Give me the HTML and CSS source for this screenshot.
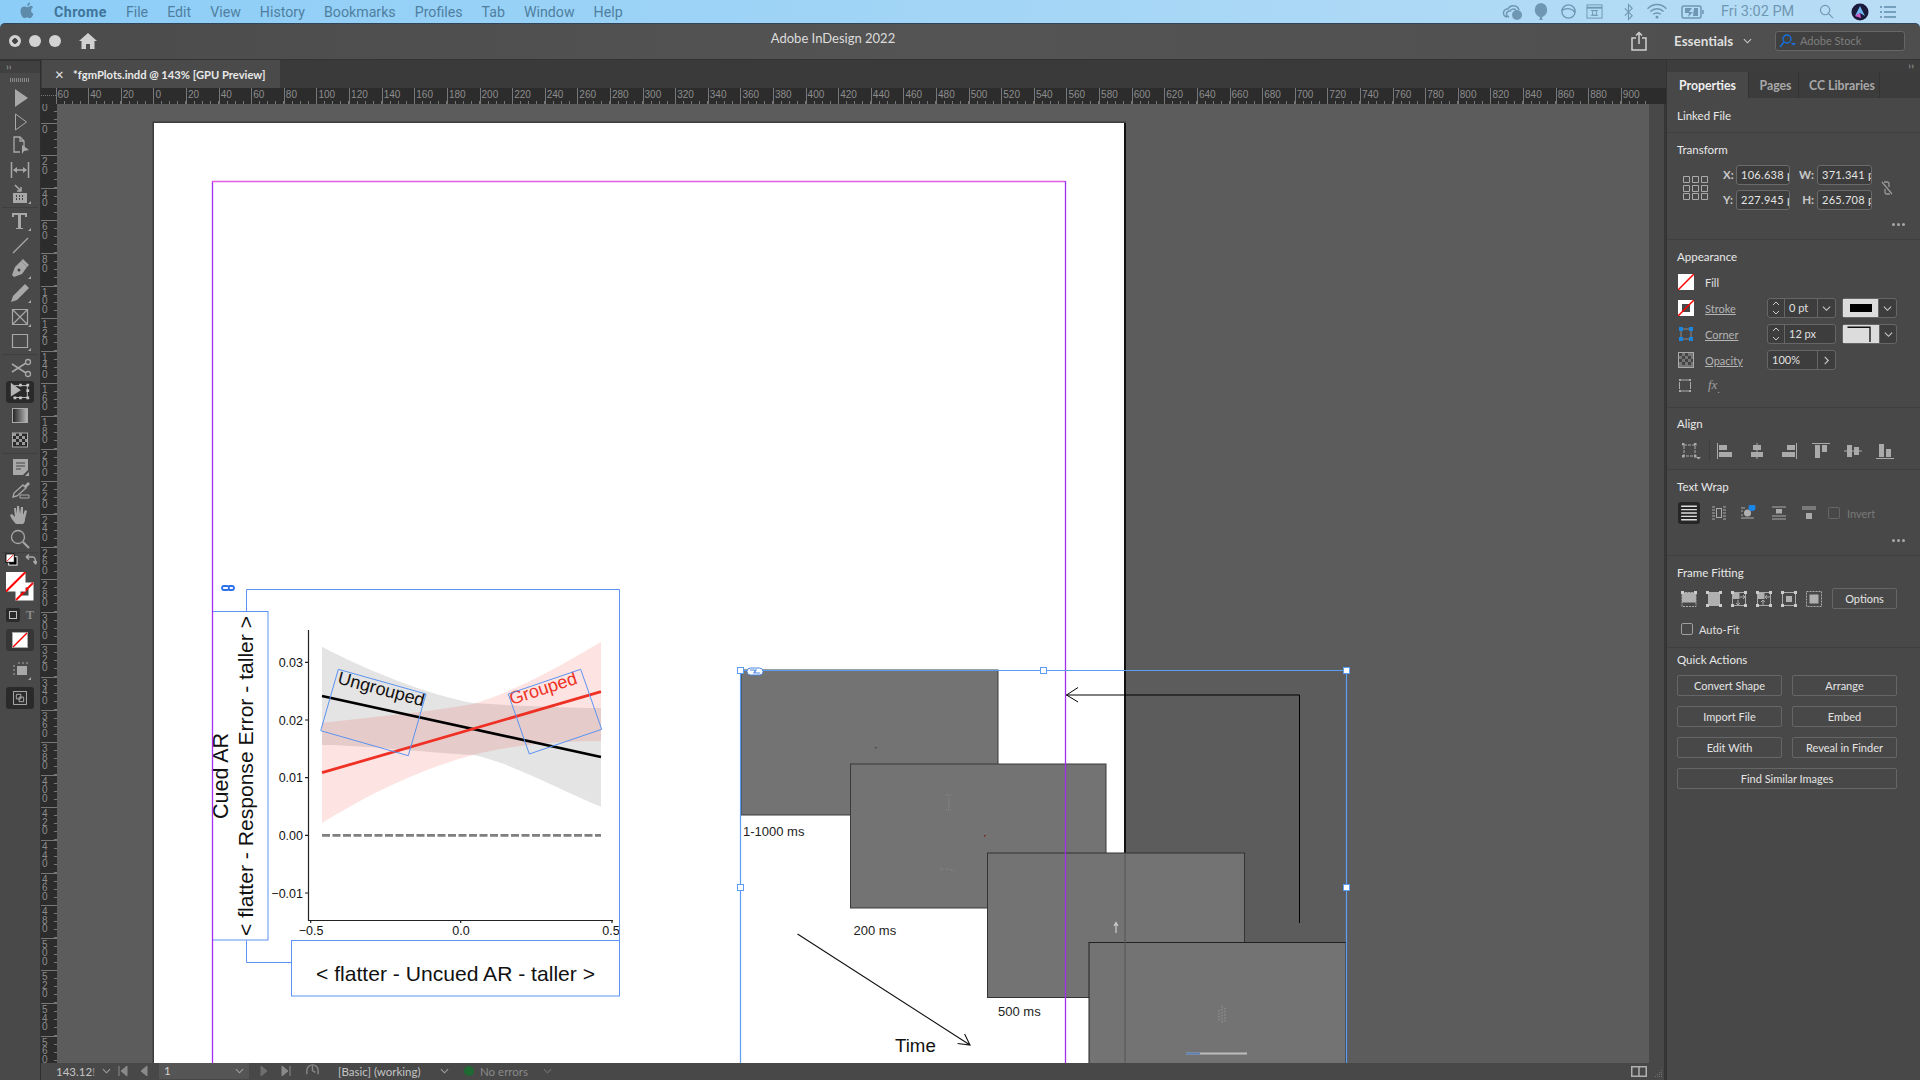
FILE: index.html
```html
<!DOCTYPE html>
<html lang="en">

<head>
    <meta charset="UTF-8">
    <title>Adobe InDesign 2022</title>
    <link rel="stylesheet" href="styles.css">
</head>

<body>
    <div class="menubar">
        <svg class="apple" viewBox="0 0 14 17"><path d="M10.2 4.6c-1.2 0-1.9.7-3 .7-1.1 0-1.9-.7-3-.7C2.300 4.600.5 6.200.5 9.200c0 3 2.200 7 4 7 1 0 1.500-.7 2.700-.7 1.200 0 1.600.7 2.700.7 1.500 0 3-2.700 3.500-4.500-1.500-.6-2.300-1.800-2.300-3.300 0-1.300.7-2.300 1.900-3-.7-1.100-1.800-1.800-2.800-1.800zM9.900.4C8.400.6 7 2 7.200 3.900 8.700 3.900 10.100 2.300 9.900.4z"/></svg>
        <div class="menu-items">
            <b>Chrome</b><span>File</span><span>Edit</span><span>View</span><span>History</span><span>Bookmarks</span><span>Profiles</span><span>Tab</span><span>Window</span><span>Help</span>
        </div>
        <div class="status-items">
            <svg class="m1" viewBox="0 0 22 18"><path d="M5 14a4 4 0 0 1 1-8 6 6 0 0 1 11 1M7 14a3 3 0 0 1 1-6 4 4 0 0 1 6-1" fill="none" stroke="#6f97b3" stroke-width="1.500"/><circle cx="15" cy="12" r="5" fill="#6f97b3"/></svg>
            <svg class="m2" viewBox="0 0 16 22"><path d="M8 1c4 0 7 3 7 8 0 4-3 7-6 8l1 3H6l1-3c-3-1-6-4-6-8 0-5 3-8 7-8z" fill="#6f97b3"/></svg>
            <svg class="m3" viewBox="0 0 18 18"><circle cx="9" cy="9" r="7" fill="none" stroke="#6f97b3" stroke-width="1.500"/><path d="M2 8c4-3 10-3 14 2" fill="none" stroke="#6f97b3" stroke-width="1.500"/></svg>
            <svg class="m4" viewBox="0 0 18 18"><rect x="1" y="2" width="16" height="14" fill="none" stroke="#6f97b3"/><path d="M1 5h16" stroke="#6f97b3" stroke-width="2"/><path d="M7 8h4v5H7zM5 8h8M5 13h8" fill="none" stroke="#6f97b3"/></svg>
            <svg class="m5" viewBox="0 0 12 18"><path d="M2 5l8 8-4 4V1l4 4-8 8" fill="none" stroke="#6f97b3" stroke-width="1.200"/></svg>
            <svg class="m6" viewBox="0 0 22 18"><path d="M1 6c6-6 14-6 20 0M4 9c4-4 10-4 14 0M7 12c2-2 6-2 8 0" fill="none" stroke="#6f97b3" stroke-width="1.500"/><circle cx="11" cy="15" r="1.500" fill="#6f97b3"/></svg>
            <svg class="m7" viewBox="0 0 24 14"><rect x="1" y="1" width="19" height="12" rx="2" fill="none" stroke="#6f97b3" stroke-width="1.500"/><path d="M4 3h7l-3 4h4l-5 5 1-4H4zM13 3h4v8h-5z" fill="#6f97b3"/><path d="M22 5v4" stroke="#6f97b3" stroke-width="1.500"/></svg>
            <span class="clock">Fri 3:02 PM</span>
            <svg class="m8" viewBox="0 0 16 16"><circle cx="6.500" cy="6.500" r="5" fill="none" stroke="#6f97b3" stroke-width="1.200"/><path d="M10 10l5 5" stroke="#6f97b3" stroke-width="1.200"/></svg>
            <svg class="m9" viewBox="0 0 18 18"><circle cx="9" cy="9" r="8.500" fill="#1a1a3a"/><path d="M9 3l5 10-5-3-5 3z" fill="#6fb6f0"/><path d="M4 13l5-3 1 5z" fill="#d85ad0"/></svg>
            <svg class="m10" viewBox="0 0 18 14"><path d="M1 2h2M5 2h12M1 7h2M5 7h12M1 12h2M5 12h12" stroke="#5f8bab" stroke-width="1.500"/></svg>
        </div>
    </div>

    <div class="titlebar">
        <div class="lights"><i class="light first"></i><i class="light"></i><i class="light"></i></div>
        <svg class="home" viewBox="0 0 18 16"><path d="M9 0l9 8h-2.500v8H11v-5H7v5H2.500V8H0z" fill="#d0d0d0"/></svg>
        <div class="app-name">Adobe InDesign 2022</div>
        <svg class="share" viewBox="0 0 16 20"><path d="M5 7H1v12h14V7h-4M8 13V2M5 4.500L8 1.500l3 3" fill="none" stroke="#d0d0d0" stroke-width="1.500"/></svg>
        <div class="workspace">Essentials <svg viewBox="0 0 10 6"><path d="M1 1l4 4 4-4" fill="none" stroke="#ccc" stroke-width="1.200"/></svg></div>
        <div class="stock">
            <svg viewBox="0 0 18 14"><circle cx="9" cy="5" r="4" fill="none" stroke="#1473e6" stroke-width="1.300"/><path d="M6 8l-4 5" stroke="#1473e6" stroke-width="1.300"/><path d="M13 9h5l-2.500 2.500z" fill="#1473e6"/></svg>
            Adobe Stock
        </div>
    </div>

    <div class="app">
        <div class="toolbar">
            <div class="tool-head">&rsaquo;&rsaquo;</div>
            <div class="grip"></div>
            <div class="tool-group">
                <div class="tool"><svg viewBox="0 0 24 24"><path d="M7 3l13 9-13 9z" fill="#a8a8a8"/></svg></div>
                <div class="tool"><svg viewBox="0 0 24 24"><path d="M7.500 4l11 8-11 8z" fill="none" stroke="#a8a8a8"/></svg></div>
                <div class="tool"><svg viewBox="0 0 24 24"><path d="M16 14V7l-4-4H6v15h6M12 3v4h4" fill="none" stroke="#a8a8a8" stroke-width="1.300"/><path d="M14 11l7 5-5 1-2 3z" fill="#a8a8a8"/></svg></div>
                <div class="tool"><svg viewBox="0 0 24 24"><path d="M3.500 4v16M20.500 4v16M6 12h12" stroke="#a8a8a8" stroke-width="1.500" fill="none"/><path d="M5 12l4-3v6zM19 12l-4-3v6z" fill="#a8a8a8"/></svg></div>
                <div class="tool"><svg viewBox="0 0 24 24"><path d="M5 11h14v10H5z" fill="#a8a8a8"/><path d="M8 14h1M11 14h1M14 14h1M8 17h1M11 17h1M14 17h1" stroke="#444" stroke-width="2"/><path d="M7 3l6 6M13 5v4H9" stroke="#a8a8a8" stroke-width="1.500" fill="none"/><path d="M20 22h3v-3z" fill="#a8a8a8"/></svg></div>
            </div>
            <div class="tool-group">
                <div class="tool"><svg viewBox="0 0 24 24"><path d="M4 4h15v4h-2V6h-4v13h2v1H8v-1h2V6H6v2H4z" fill="#a8a8a8"/><path d="M20 22h3v-3z" fill="#a8a8a8"/></svg></div>
                <div class="tool"><svg viewBox="0 0 24 24"><path d="M5 20L20 5" stroke="#a8a8a8" stroke-width="1.300"/></svg></div>
                <div class="tool"><svg viewBox="0 0 24 24"><path d="M13 4l6 6-5 7-8 3-2-2 3-8z" fill="#a8a8a8"/><path d="M15 2l6 6-2 2-6-6z" fill="#a8a8a8"/><circle cx="11" cy="13" r="1.500" fill="#444"/><path d="M20 22h3v-3z" fill="#a8a8a8"/></svg></div>
                <div class="tool"><svg viewBox="0 0 24 24"><path d="M17 3l4 4-12 12-6 2 2-6z" fill="#a8a8a8"/><path d="M20 22h3v-3z" fill="#a8a8a8"/></svg></div>
                <div class="tool"><svg viewBox="0 0 24 24"><path d="M4.500 4.500h15v15h-15zM4.500 4.500l15 15M19.500 4.500l-15 15" fill="none" stroke="#a8a8a8" stroke-width="1.200"/><path d="M20 22h3v-3z" fill="#a8a8a8"/></svg></div>
                <div class="tool"><svg viewBox="0 0 24 24"><path d="M4.500 5.500h15v13h-15z" fill="none" stroke="#a8a8a8" stroke-width="1.200"/><path d="M20 22h3v-3z" fill="#a8a8a8"/></svg></div>
            </div>
            <div class="tool-group">
                <div class="tool"><svg viewBox="0 0 24 24"><circle cx="20" cy="6" r="2.500" fill="none" stroke="#a8a8a8" stroke-width="1.300"/><circle cx="20" cy="18" r="2.500" fill="none" stroke="#a8a8a8" stroke-width="1.300"/><path d="M18 7L4 16M18 17L4 8" stroke="#a8a8a8" stroke-width="1.500"/></svg></div>
                <div class="tool selected"><svg viewBox="0 0 24 24"><path d="M2 2l11 8-11 7z" fill="#b5b5b5"/><path d="M6 5h14v13H5" fill="none" stroke="#c8c8c8"/><path d="M5 17h3v3H5zM11 17h3v3h-3zM19 17h3v3h-3zM19 9h3v3h-3zM19 3h3v3h-3zM11 3h3v3h-3z" fill="#c8c8c8"/></svg></div>
                <div class="tool"><svg viewBox="0 0 24 24"><defs><linearGradient id="gt"><stop offset="0" stop-color="#222"/><stop offset="1" stop-color="#bbb"/></linearGradient></defs><rect x="4.500" y="4.500" width="15" height="14" fill="url(#gt)" stroke="#aaa"/></svg></div>
                <div class="tool"><svg viewBox="0 0 24 24"><rect x="4.500" y="5" width="15" height="14" fill="#2a2a2a" stroke="#aaa"/><path d="M5 5h3v3H5zM11 5h3v3h-3zM8 8h3v3H8zM14 8h3v3h-3zM5 11h3v3H5zM11 11h3v3h-3zM17 11h2v3h-2zM8 14h3v3H8zM14 14h3v3h-3z" fill="#999"/></svg></div>
            </div>
            <div class="tool-group">
                <div class="tool"><svg viewBox="0 0 24 24"><path d="M5 4h15v11l-5 5H5z" fill="#a8a8a8"/><path d="M8 8h9M8 11h9M8 14h5" stroke="#444" stroke-width="1.200"/><path d="M17 21l4-4v4z" fill="#a8a8a8"/></svg></div>
                <div class="tool"><svg viewBox="0 0 24 24"><path d="M20 3l2 2-4 4-2-2z" fill="#a8a8a8"/><path d="M15 6l3 3-9 8-4 1 1-4z" fill="none" stroke="#a8a8a8" stroke-width="1.300"/><path d="M12 16h9v3h-9z" fill="none" stroke="#a8a8a8"/></svg></div>
                <div class="tool"><svg viewBox="0 0 24 24"><path d="M8 21c-2-2-5-6-6-9l2-1 3 3-1-9 2 0 1 6 0-8h2l1 8 1-7h2l0 8 2-5 2 1-2 8c0 3-1 4-2 5z" fill="#a8a8a8"/></svg></div>
                <div class="tool"><svg viewBox="0 0 24 24"><circle cx="10" cy="10" r="6.500" fill="none" stroke="#a8a8a8" stroke-width="1.300"/><path d="M15 15l6 6" stroke="#a8a8a8" stroke-width="2"/></svg></div>
            </div>
            <div class="swatch-tools">
                <div class="defaults">
                    <svg viewBox="0 0 14 14"><rect x="4" y="4" width="9" height="9" fill="#000" stroke="#fff"/><rect x="1" y="1" width="9" height="9" fill="#fff" stroke="#000"/><path d="M2 9l7-7" stroke="#f00"/></svg>
                    <svg viewBox="0 0 12 12"><path d="M1 4h7c2 0 2.500 2 2.500 6M1 4l3-2.500M1 4l3 2.500M10.500 11l-2-3M10.500 11l2-3" fill="none" stroke="#aaa" stroke-width="1.400"/></svg>
                </div>
                <div class="fillstroke">
                    <svg viewBox="0 0 29 30"><rect x="9.500" y="10.500" width="18" height="18" fill="#fff"/><path d="M14.500 15.500h8v8h-8z" fill="#484848"/><path d="M10 28l17-17" stroke="#f00" stroke-width="1.800"/><rect y="0" width="19.500" height="19.500" fill="#fff"/><path d="M0 19.500L19.500 0" stroke="#f00" stroke-width="2"/></svg>
                </div>
                <div class="format-row"><span class="fmt-box"></span><span class="fmt-t">T</span></div>
                <div class="apply-box"><svg viewBox="0 0 16 16"><rect x=".5" y=".5" width="15" height="15" fill="#fff" stroke="#aaa"/><path d="M1 15L15 1" stroke="#f00" stroke-width="1.500"/></svg></div>
                <div class="tool mode-tool"><svg viewBox="0 0 24 24"><path d="M9 8h10v9H9z" fill="#a8a8a8"/><path d="M7 8H5M7 12H5M7 16H5M11 6V4M15 6V4M19 6V4" stroke="#a8a8a8"/><path d="M20 22h3v-3z" fill="#a8a8a8"/></svg></div>
                <div class="tool selected mode-box"><svg viewBox="0 0 24 24"><rect x="5" y="5" width="14" height="14" fill="none" stroke="#b5b5b5"/><path d="M8 8h5v5H8zM11 11h5v5h-5z" fill="none" stroke="#b5b5b5"/></svg></div>
            </div>
        </div>

        <div class="main">
            <div class="tabstrip">
                <div class="doc-tab"><span class="tab-x">&times;</span>*fgmPlots.indd @ 143% [GPU Preview]</div>
            </div>
            <div class="ruler-h">
                <div class="ruler-corner"></div>
                <span>60</span><span>40</span><span>20</span><span>0</span><span>20</span><span>40</span><span>60</span><span>80</span><span>100</span><span>120</span><span>140</span><span>160</span><span>180</span><span>200</span><span>220</span><span>240</span><span>260</span><span>280</span><span>300</span><span>320</span><span>340</span><span>360</span><span>380</span><span>400</span><span>420</span><span>440</span><span>460</span><span>480</span><span>500</span><span>520</span><span>540</span><span>560</span><span>580</span><span>600</span><span>620</span><span>640</span><span>660</span><span>680</span><span>700</span><span>720</span><span>740</span><span>760</span><span>780</span><span>800</span><span>820</span><span>840</span><span>860</span><span>880</span><span>900</span>
            </div>
            <div class="work-row">
                <div class="ruler-v">
                    <span>0</span><span>0</span><span>20</span><span>40</span><span>60</span><span>80</span><span>100</span><span>120</span><span>140</span><span>160</span><span>180</span><span>200</span><span>220</span><span>240</span><span>260</span><span>280</span><span>300</span><span>320</span><span>340</span><span>360</span><span>380</span><span>400</span><span>420</span><span>440</span><span>460</span><span>480</span><span>500</span><span>520</span><span>540</span><span>560</span>
                </div>

                <!-- document canvas, coordinates are screen pixels -->
                <svg class="canvas" viewBox="57 104 1592 959">
                    <rect x="152.500" y="121.500" width="973" height="960" fill="#3c3c3c"/>
                    <rect x="154" y="123" width="970" height="950" fill="#fff"/>
                    <rect x="1124" y="123" width="2" height="950" fill="#111"/>

                    <!-- left figure -->
                    <path d="M322 646.700C370 672 430 695 473 703C520 706 570 708 601 708V806.700C560 790 510 762 473 755C420 752 360 745 322 745Z" fill="#000" fill-opacity=".105"/>
                    <path d="M322 723C380 716 430 712 473 704C520 690 570 660 601 641.700V741C560 741 510 745 473 755C410 772 360 800 322 823Z" fill="#ee3124" fill-opacity=".13"/>
                    <path d="M322 696L601 757" stroke="#000" stroke-width="2.800"/>
                    <path d="M322 772.700L601 691.700" stroke="#ee3124" stroke-width="2.800"/>
                    <path d="M322 835.300H601" stroke="#7f7f7f" stroke-width="2.800" stroke-dasharray="8 2.500"/>
                    <path d="M308.500 630V920.500H613M305 662.300h3M305 720h3M305 777.700h3M305 835.300h3M305 893h3M310.700 920v3M460.700 920v3M612 920v3" fill="none" stroke="#222" stroke-width="1.200"/>
                    <g class="tick-y">
                        <text x="303" y="666.500">0.03</text>
                        <text x="303" y="724.500">0.02</text>
                        <text x="303" y="782">0.01</text>
                        <text x="303" y="839.500">0.00</text>
                        <text x="303" y="897.500">−0.01</text>
                    </g>
                    <g class="tick-x">
                        <text x="311" y="934.500">−0.5</text>
                        <text x="461" y="934.500">0.0</text>
                        <text x="611" y="934.500">0.5</text>
                    </g>
                    <text class="plot-label" transform="translate(336.700 683.300) rotate(15)">Ungrouped</text>
                    <text class="plot-label red" transform="translate(511.700 705) rotate(-18)">Grouped</text>
                    <text class="axis-cued" transform="translate(228 776) rotate(-90)">Cued AR</text>
                    <text class="axis-long" transform="translate(253 776) rotate(-90)">&lt; flatter - Response Error - taller &gt;</text>
                    <text class="axis-long" x="455.500" y="980.500">&lt; flatter - Uncued AR - taller &gt;</text>

                    <g fill="none" stroke="#5b93f2" stroke-width="1">
                        <path d="M246.500 611.500V589.500H619.500V940M246.500 940.500V962.500H291.500"/>
                        <rect x="212.500" y="611.500" width="55.500" height="328.500"/>
                        <rect x="291.500" y="940.500" width="328" height="55.500"/>
                        <path d="M338.300 669.300L426 694L408.300 755.700L320.700 730.700Z"/>
                        <path d="M508.300 694L580.700 669.300L601.700 729.300L529.300 754Z"/>
                    </g>
                    <path d="M224 586h3a2 2 0 0 1 0 4h-3a2 2 0 0 1 0-4zM229 586h3a2 2 0 0 1 0 4h-3" fill="none" stroke="#2f72e8" stroke-width="1.800"/>

                    <!-- right figure -->
                    <rect x="741" y="670" width="257" height="145" fill="#737373" stroke="#3a3a3a"/>
                    <rect x="850.500" y="764" width="255.500" height="144" fill="#737373" stroke="#3a3a3a"/>
                    <rect x="987.500" y="853" width="257" height="144.500" fill="#737373" stroke="#333"/>
                    <rect x="1089" y="942.500" width="257" height="140" fill="#737373" stroke="#222"/>
                    <path d="M1125 853V1063" stroke="#555"/>
                    <path d="M1299.500 923V695H1066M1078 687.500L1066.500 695L1078 702" fill="none" stroke="#000" stroke-width="1"/>
                    <path d="M1116 933V923M1114 926l2-3.500 2 3.500" stroke="#ccc" fill="none" stroke-width="1.200"/>
                    <path d="M946 795h6M949 798v10M946 810h6M940 869h4M946 869h3M951 870h3" stroke="#8f8f8f" stroke-dasharray="1 1"/>
                    <path d="M1222 1006v18M1225 1008v15M1219 1010v12" stroke="#999" stroke-dasharray="1.500 1.500"/>
                    <rect x="984" y="835" width="1.500" height="1.500" fill="#7a2020"/>
                    <rect x="875" y="747" width="1.500" height="1.500" fill="#444"/>
                    <rect x="1186" y="1052.500" width="61" height="2" fill="#bdbdbd"/>
                    <rect x="1186" y="1052.500" width="14" height="2" fill="#5b7fb5"/>
                    <g class="stim-label">
                        <text x="743" y="836">1-1000 ms</text>
                        <text x="853.500" y="935">200 ms</text>
                        <text x="998" y="1016">500 ms</text>
                    </g>
                    <text class="time-label" x="895" y="1052">Time</text>
                    <path d="M797.500 934L970 1045M964.600 1034L970 1045L957.600 1043.500" fill="none" stroke="#111" stroke-width="1.100"/>

                    <!-- guides -->
                    <path d="M212.500 1063V181.500" stroke="#a62df0" stroke-width="1.300" fill="none"/>
                    <path d="M212 181.500H1065" stroke="#e25ce8" stroke-width="1.300"/>
                    <path d="M1065.500 181V1063" stroke="#a02fe8" stroke-width="1.300"/>

                    <path d="M740.500 1063V670.500H1346.500V1063" fill="none" stroke="#5b9cf5" stroke-width="1.200"/>
                    <g fill="#fff" stroke="#5b9cf5">
                        <rect x="737.500" y="667.500" width="6" height="6"/>
                        <rect x="1040.500" y="667.500" width="6" height="6"/>
                        <rect x="1343.500" y="667.500" width="6" height="6"/>
                        <rect x="737.500" y="884.500" width="6" height="6"/>
                        <rect x="1343.500" y="884.500" width="6" height="6"/>
                    </g>
                    <rect x="747" y="668" width="16" height="7" rx="3.500" fill="#fff" stroke="#4a86e0"/>
                    <path d="M750 670h4a1.500 1.500 0 0 1 0 3h-1M760 673h-4a1.500 1.500 0 0 1 0-3h1" fill="none" stroke="#4a86e0"/>
                </svg>

                <div class="scroll-v"></div>
            </div>
            <div class="statusbar">
                <span class="zoom-val">143.12<span class="cut">!</span></span>
                <svg class="chev" viewBox="0 0 10 6"><path d="M1 1l4 4 4-4"/></svg>
                <svg class="nav first" viewBox="0 0 10 12"><path d="M1 1v10M9 1v10L3 6z"/></svg>
                <svg class="nav" viewBox="0 0 10 12"><path d="M8 1v10L2 6z"/></svg>
                <div class="page-field">1<svg class="chev" viewBox="0 0 10 6"><path d="M1 1l4 4 4-4"/></svg></div>
                <svg class="nav dim" viewBox="0 0 10 12"><path d="M2 1v10l6-5z"/></svg>
                <svg class="nav" viewBox="0 0 10 12"><path d="M1 1v10l6-5zM9 1v10"/></svg>
                <svg class="timer" viewBox="0 0 16 16"><path d="M2 12V8a6 6 0 0 1 12 0v4M8 3v5l3 2" fill="none" stroke="#888" stroke-width="1.500"/></svg>
                <span class="preflight">[Basic] (working)</span>
                <svg class="chev" viewBox="0 0 10 6"><path d="M1 1l4 4 4-4"/></svg>
                <i class="ok-dot"></i>
                <span class="no-errors">No errors</span>
                <svg class="chev dim" viewBox="0 0 10 6"><path d="M1 1l4 4 4-4"/></svg>
                <svg class="split" viewBox="0 0 16 11"><path d="M.75.75h14.500v9.500H.75zM8 .75v9.500" fill="none" stroke="#b0b0b0" stroke-width="1.500"/></svg>
                <svg class="resize-grip" viewBox="0 0 9 9"><path d="M7 1h1v1H7zM5 3h1v1H5zM7 3h1v1H7zM3 5h1v1H3zM5 5h1v1H5zM7 5h1v1H7zM1 7h1v1H1zM3 7h1v1H3zM5 7h1v1H5zM7 7h1v1H7z" fill="#707070" stroke="none"/></svg>
            </div>
        </div>

        <div class="panel">
            <div class="panel-head">&rsaquo;&rsaquo;</div>
            <div class="tabs">
                <div class="ptab active">Properties</div>
                <div class="ptab t2">Pages</div>
                <div class="ptab t3">CC Libraries</div>
            </div>

            <div class="sec sec-linked">
                <div class="sec-title">Linked File</div>
            </div>

            <div class="sec sec-transform">
                <div class="sec-title">Transform</div>
                <div class="transform">
                    <svg class="proxy" viewBox="0 0 25 24"><g fill="none" stroke="#aaa"><path d="M.5.500h6v6h-6zM9.500.500h6v6h-6zM18.500.500h6v6h-6zM.5 9.500h6v6h-6zM9.500 9.500h6v6h-6zM18.500 9.500h6v6h-6zM.5 17.500h6v6h-6zM9.500 17.500h6v6h-6zM18.500 17.500h6v6h-6z"/></g></svg>
                    <div class="xywh">
                        <label>X:</label><div class="field">106.638 p</div>
                        <label class="right">W:</label><div class="field">371.341 p</div>
                        <label>Y:</label><div class="field">227.945 p</div>
                        <label class="right">H:</label><div class="field">265.708 p</div>
                    </div>
                    <svg class="chain" viewBox="0 0 12 14"><path d="M3 1h3a2 2 0 0 1 2 2v3M9 13H6a2 2 0 0 1-2-2V8M1 1l10 12" fill="none" stroke="#999" stroke-width="1.300"/></svg>
                </div>
                <div class="dots"><i></i><i></i><i></i></div>
            </div>

            <div class="sec sec-appearance">
                <div class="sec-title">Appearance</div>
                <div class="app-row">
                    <svg class="sw" viewBox="0 0 16 16"><rect width="16" height="16" fill="#fff"/><path d="M0 16L16 0" stroke="#f00" stroke-width="1.500"/></svg>
                    <span>Fill</span>
                </div>
                <div class="app-row">
                    <svg class="sw" viewBox="0 0 16 16"><rect width="16" height="16" fill="#fff"/><rect x="4" y="4" width="8" height="8" fill="#484848"/><path d="M0 16L16 0" stroke="#f00" stroke-width="1.500"/></svg>
                    <span class="lnk">Stroke</span>
                    <div class="spin"><div class="arrows"><svg viewBox="0 0 8 14"><path d="M1 4l3-3 3 3M1 10l3 3 3-3"/></svg></div><div class="spin-val">0 pt</div><div class="drop"><svg viewBox="0 0 10 6"><path d="M1 1l4 4 4-4"/></svg></div></div>
                    <div class="pick"><div class="pick-sw"><i class="black-bar"></i></div><div class="drop"><svg viewBox="0 0 10 6"><path d="M1 1l4 4 4-4"/></svg></div></div>
                </div>
                <div class="app-row">
                    <svg class="sw" viewBox="0 0 16 16"><path d="M5 3h6M5 13h6M3 5v6M13 5v6" stroke="#888"/><path d="M1 1h4v4H1zM11 1h4v4h-4zM1 11h4v4H1zM11 11h4v4h-4z" fill="#1a86e0"/></svg>
                    <span class="lnk">Corner</span>
                    <div class="spin"><div class="arrows"><svg viewBox="0 0 8 14"><path d="M1 4l3-3 3 3M1 10l3 3 3-3"/></svg></div><div class="spin-val">12 px</div></div>
                    <div class="pick"><div class="pick-sw"><svg viewBox="0 0 36 20"><path d="M3 2.500h25V19" fill="none" stroke="#111" stroke-width="1.500"/></svg></div><div class="drop"><svg viewBox="0 0 10 6"><path d="M1 1l4 4 4-4"/></svg></div></div>
                </div>
                <div class="app-row">
                    <svg class="sw" viewBox="0 0 16 16"><rect x=".5" y=".5" width="15" height="15" fill="#777" stroke="#aaa"/><path d="M1 1h3v3H1zM7 1h3v3H7zM4 4h3v3H4zM10 4h3v3h-3zM1 7h3v3H1zM7 7h3v3H7zM13 7h2v3h-2zM4 10h3v3H4zM10 10h3v3h-3z" fill="#444"/></svg>
                    <span class="lnk">Opacity</span>
                    <div class="spin"><div class="spin-val">100%</div><div class="drop"><svg viewBox="0 0 6 10"><path d="M1 1l4 4-4 4"/></svg></div></div>
                </div>
                <div class="app-row">
                    <svg class="sw fx-box" viewBox="0 0 16 16"><path d="M3 2h8M3 13h8M1.500 4v7M12.500 4v7" stroke="#aaa" fill="none"/><path d="M1 1h2v2H1zM11 1h2v2h-2zM1 12h2v2H1zM11 12h2v2h-2z" fill="#aaa"/></svg>
                    <span class="fx">fx<sub>.</sub></span>
                </div>
            </div>

            <div class="sec sec-align">
                <div class="sec-title">Align</div>
                <div class="icon-row">
                    <div class="ico a0"><svg viewBox="0 0 20 18"><path d="M3 3h11v11H3z" fill="none" stroke="#aaa" stroke-dasharray="3 1"/><path d="M1 1h2.500v2.500H1zM13 1h2.500v2.500H13zM1 13h2.500v2.500H1zM13 13h2.500v2.500H13z" fill="#aaa"/><path d="M15 15h5l-2.500 2.500z" fill="#aaa"/></svg></div>
                    <i class="vsep"></i>
                    <div class="ico a1"><svg viewBox="0 0 16 16"><path d="M.5 0v16" stroke="#aaa"/><path d="M2 2h8v5H2zM2 9h13v5H2z" fill="#aaa"/></svg></div>
                    <div class="ico a1"><svg viewBox="0 0 16 16"><path d="M8 0v16" stroke="#aaa"/><path d="M4 2h8v5H4zM2 9h12v5H2z" fill="#aaa"/></svg></div>
                    <div class="ico a1"><svg viewBox="0 0 16 16"><path d="M15.500 0v16" stroke="#aaa"/><path d="M6 2h8v5H6zM1 9h13v5H1z" fill="#aaa"/></svg></div>
                    <div class="ico a1"><svg viewBox="0 0 18 16"><path d="M0 .5h18" stroke="#aaa"/><path d="M3 2h5v13H3zM10 2h5v7h-5z" fill="#aaa"/></svg></div>
                    <div class="ico a1"><svg viewBox="0 0 18 16"><path d="M0 8h18" stroke="#aaa"/><path d="M3 2h5v12H3zM10 4h5v8h-5z" fill="#aaa"/></svg></div>
                    <div class="ico a1"><svg viewBox="0 0 18 16"><path d="M0 15.500h18" stroke="#aaa"/><path d="M3 1h5v13H3zM10 6h5v8h-5z" fill="#aaa"/></svg></div>
                </div>
            </div>

            <div class="sec sec-wrap">
                <div class="sec-title">Text Wrap</div>
                <div class="icon-row wrap-row">
                    <div class="ico w1 on"><svg viewBox="0 0 16 16"><path d="M1 2h14M1 5h14M1 8h14M1 11h14M1 14h14" stroke="#ddd" stroke-width="1.200"/></svg></div>
                    <div class="ico w1"><svg viewBox="0 0 16 16"><path d="M1 2h3M1 5h3M1 8h3M1 11h3M1 14h3M12 2h3M12 5h3M12 8h3M12 11h3M12 14h3" stroke="#aaa"/><rect x="5.500" y="3.500" width="5" height="9" fill="none" stroke="#aaa"/></svg></div>
                    <div class="ico w1 dot-ico"><svg viewBox="0 0 18 16"><path d="M1 3h4M1 6h2M1 10h2M1 13h13" stroke="#aaa"/><circle cx="7.500" cy="8" r="3.500" fill="#b0b0b0"/><circle cx="12" cy="2.500" r="3.500" fill="#1a86e8"/></svg></div>
                    <div class="ico w1"><svg viewBox="0 0 16 16"><path d="M1 2h14M1 14h14M1 11h14" stroke="#aaa"/><rect x="5" y="4" width="6" height="4.500" fill="#aaa"/></svg></div>
                    <div class="ico w1"><svg viewBox="0 0 16 16"><path d="M1 2h14M1 4h14" stroke="#aaa"/><rect x="5" y="8" width="6" height="6" fill="#aaa"/></svg></div>
                    <div class="invert"><i class="cb dim"></i><span>Invert</span></div>
                </div>
                <div class="dots"><i></i><i></i><i></i></div>
            </div>

            <div class="sec sec-fit">
                <div class="sec-title">Frame Fitting</div>
                <div class="icon-row fit-row">
                    <div class="ico f1"><svg viewBox="0 0 16 16"><rect x="1" y="1.500" width="14" height="10" fill="#b0b0b0"/><rect x="1" y="1.500" width="14" height="14" fill="none" stroke="#aaa" stroke-dasharray="2 1"/><path d="M0 0h3v3H0zM13 0h3v3h-3z" fill="#ccc"/></svg></div>
                    <div class="ico f1"><svg viewBox="0 0 16 16"><rect x="2" y="1" width="12" height="14" fill="#b0b0b0"/><path d="M0 0h3v3H0zM13 0h3v3h-3zM0 13h3v3H0zM13 13h3v3h-3z" fill="#ccc"/></svg></div>
                    <div class="ico f1"><svg viewBox="0 0 16 16"><rect x="1.500" y="1.500" width="13" height="13" fill="none" stroke="#aaa"/><rect x="2" y="2" width="6.500" height="6" fill="#b0b0b0"/><path d="M9 6h5M12 4l2 2-2 2M7 9v5M5 12l2 2 2-2" stroke="#aaa" fill="none"/><path d="M0 0h3v3H0zM13 0h3v3h-3zM0 13h3v3H0zM13 13h3v3h-3z" fill="#ccc"/></svg></div>
                    <div class="ico f1"><svg viewBox="0 0 16 16"><rect x="1.500" y="1.500" width="13" height="13" fill="none" stroke="#aaa"/><rect x="2" y="2" width="6.500" height="6" fill="#b0b0b0"/><path d="M14 6H9M11 4L9 6l2 2M7 14V9M5 11l2-2 2 2" stroke="#aaa" fill="none"/><path d="M0 0h3v3H0zM13 0h3v3h-3zM0 13h3v3H0zM13 13h3v3h-3z" fill="#ccc"/></svg></div>
                    <div class="ico f1"><svg viewBox="0 0 16 16"><rect x="1.500" y="1.500" width="13" height="13" fill="none" stroke="#aaa"/><rect x="5" y="5" width="6" height="6" fill="#b0b0b0"/><path d="M0 0h3v3H0zM13 0h3v3h-3zM0 13h3v3H0zM13 13h3v3h-3z" fill="#ccc"/></svg></div>
                    <div class="ico f1"><svg viewBox="0 0 16 16"><rect x=".5" y=".5" width="15" height="15" fill="none" stroke="#aaa" stroke-dasharray="2 1"/><rect x="3.500" y="3.500" width="9" height="9" fill="#b0b0b0"/></svg></div>
                    <button class="btn options">Options</button>
                </div>
                <div class="autofit"><i class="cb"></i><span>Auto-Fit</span></div>
            </div>

            <div class="sec sec-quick">
                <div class="sec-title">Quick Actions</div>
                <div class="quick-grid">
                    <button class="btn">Convert Shape</button>
                    <button class="btn">Arrange</button>
                    <button class="btn">Import File</button>
                    <button class="btn">Embed</button>
                    <button class="btn">Edit With</button>
                    <button class="btn">Reveal in Finder</button>
                    <button class="btn span2">Find Similar Images</button>
                </div>
            </div>
        </div>
    </div>
</body>

</html>
```

FILE: styles.css
```css
* {
    box-sizing: border-box;
}

html,
body {
    margin: 0;
    height: 100%;
}

body {
    width: 1920px;
    height: 1080px;
    overflow: hidden;
    display: flex;
    flex-direction: column;
    background: linear-gradient(90deg, #8ccdf7, #b9ddf5);
    font-family: Lato, "Liberation Sans", sans-serif;
    font-size: 11px;
    color: #e4e4e4;
}

svg {
    display: block;
}

/* mac menu bar */
.menubar {
    height: 23px;
    flex: none;
    display: flex;
    align-items: center;
    font-family: Roboto, sans-serif;
    font-size: 14.200px;
    color: #4f7f9f;
}

.apple {
    width: 14px;
    height: 17px;
    margin-left: 20px;
    margin-bottom: 2px;
    fill: #5f8bab;
}

.menu-items {
    display: flex;
    gap: 19px;
    margin-left: 20px;
}

.menu-items b {
    color: #3f7599;
    letter-spacing: .45px;
}

.status-items {
    margin-left: auto;
    position: relative;
    height: 23px;
    width: 415px;
}

.status-items svg {
    position: absolute;
    top: 3px;
}

.m1 { left: -3px; width: 22px; height: 18px; }
.m2 { left: 29px; width: 14px; height: 20px; top: 2px !important; }
.m3 { left: 55px; width: 17px; height: 17px; }
.m4 { left: 81px; width: 17px; height: 17px; }
.m5 { left: 118px; width: 11px; height: 18px; }
.m6 { left: 141px; width: 22px; height: 17px; }
.m7 { left: 176px; width: 24px; height: 14px; top: 5px !important; }
.m8 { left: 314px; width: 15px; height: 15px; top: 4px !important; }
.m9 { left: 346px; width: 18px; height: 18px; }
.m10 { left: 374px; width: 18px; height: 14px; top: 5px !important; }

.clock {
    position: absolute;
    left: 216px;
    top: 3px;
    color: #6f97b3;
    font-size: 14.500px;
    white-space: nowrap;
}

/* app title bar */
.titlebar {
    height: 37px;
    flex: none;
    display: flex;
    align-items: center;
    position: relative;
    padding-bottom: 2px;
    background: linear-gradient(90deg, #4b4b4b, #545454 50%, #4e4e4e);
    border-top: 1px solid #30455a;
    border-bottom: 1px solid #333;
    border-radius: 5px 5px 0 0;
}

.lights {
    display: flex;
    gap: 8px;
    margin-left: 9px;
}

.light {
    width: 12px;
    height: 12px;
    border-radius: 50%;
    background: #d2d2d2;
}

.light.first {
    background: radial-gradient(circle, #444 0 2.500px, #d2d2d2 3px);
}

.home {
    width: 18px;
    height: 16px;
    margin-left: 18px;
}

.app-name {
    position: absolute;
    left: 0;
    top: 6px;
    width: 1666px;
    text-align: center;
    font-size: 13px;
    color: #dcdcdc;
}

.share {
    width: 16px;
    height: 20px;
    margin-left: auto;
    margin-right: 27px;
}

.workspace {
    width: 101px;
    display: flex;
    align-items: center;
    gap: 10px;
    font-size: 13.500px;
    font-weight: 700;
    color: #dedede;
}

.workspace svg {
    width: 9px;
    height: 6px;
}

.stock {
    width: 130px;
    height: 20px;
    margin-right: 15px;
    display: flex;
    align-items: center;
    gap: 4px;
    padding-left: 2px;
    background: #404040;
    border: 1px solid #666;
    border-radius: 3px;
    color: #7e7e7e;
}

.stock svg {
    width: 18px;
    height: 14px;
}

/* layout */
.app {
    flex: 1;
    min-height: 0;
    display: flex;
}

/* tools */
.toolbar {
    width: 41px;
    flex: none;
    background: #494949;
    border-right: 1px solid #2e2e2e;
    border-top: 1px solid #333;
}

.tool-head {
    height: 12px;
    line-height: 10px;
    padding-left: 6px;
    font-size: 10px;
    color: #aaa;
    background: #404040;
}

.grip {
    height: 13px;
    margin: 0 10px;
    background: repeating-linear-gradient(90deg, #8a8a8a 0 1px, transparent 1px 2px) center / 100% 4px no-repeat;
}

.tool-group {
    margin: 0 2px 1px;
    padding-bottom: 1px;
    border-bottom: 1px solid #3f3f3f;
}

.tool {
    height: 24px;
    display: flex;
    justify-content: center;
    align-items: center;
}

.tool svg {
    width: 24px;
    height: 24px;
}

.tool.selected {
    width: 28px;
    height: 22px;
    margin: 1px 4px;
    background: #2a2a2a;
    border-radius: 3px;
}

.tool.selected svg {
    width: 22px;
    height: 22px;
}

.swatch-tools {
    margin-top: -2px;
}

.defaults {
    display: flex;
    align-items: center;
    gap: 7px;
    padding-left: 5px;
    height: 14px;
}

.defaults svg {
    width: 13px;
    height: 13px;
}

.defaults svg + svg {
    width: 12px;
    height: 12px;
}

.fillstroke {
    margin: 6px 0 0 6px;
}

.fillstroke svg {
    width: 29px;
    height: 30px;
}

.format-row {
    display: flex;
    align-items: center;
    gap: 3px;
    height: 14px;
    margin: 6px 0 0 6px;
}

.fmt-box {
    width: 14px;
    height: 14px;
    background: #2a2a2a;
    border-radius: 2px;
    position: relative;
}

.fmt-box::after {
    content: "";
    position: absolute;
    inset: 3px;
    border: 1px solid #c0c0c0;
}

.fmt-t {
    width: 14px;
    text-align: center;
    font: 700 12px "Liberation Serif", serif;
    color: #8a8a8a;
}

.apply-box {
    width: 28px;
    height: 22px;
    margin: 7px 0 0 6px;
    padding: 3px 6px;
    background: #363636;
    border-radius: 3px;
}

.apply-box svg {
    width: 16px;
    height: 16px;
}

.mode-tool {
    margin-top: 7px;
}

.mode-box {
    margin-top: 5px !important;
    margin-left: 6px !important;
}

/* middle column */
.main {
    flex: 1;
    min-width: 0;
    display: flex;
    flex-direction: column;
}

.tabstrip {
    height: 28px;
    flex: none;
    display: flex;
    background: #3a3a3a;
}

.doc-tab {
    width: 238px;
    margin-left: 1px;
    display: flex;
    align-items: center;
    background: #4a4a4a;
    font-size: 11.200px;
    font-weight: 700;
    color: #e8e8e8;
    white-space: nowrap;
}

.tab-x {
    width: 31px;
    padding-left: 13px;
    font-size: 15px;
    font-weight: 400;
}

.ruler-h {
    height: 16px;
    flex: none;
    display: flex;
    background-color: #2c2c2c;
    font-family: "Liberation Sans", sans-serif;
    font-size: 10px;
    color: #8c8c8c;
    overflow: hidden;
}

.ruler-corner {
    width: 14.600px;
    flex: none;
    border-bottom: 1px dotted #777;
    height: 8px;
}

.ruler-h span {
    width: 32.620px;
    flex: none;
    height: 16px;
    padding-left: 1px;
    line-height: 13px;
    border-left: 1px solid #777;
    background: repeating-linear-gradient(90deg, transparent 0 7.100px, #777 7.100px 8.100px) 0 100% / 100% 3px no-repeat;
}

.work-row {
    flex: 1;
    min-height: 0;
    display: flex;
}

.ruler-v {
    width: 16px;
    flex: none;
    overflow: hidden;
    background: #2c2c2c;
    font-family: "Liberation Sans", sans-serif;
    font-size: 10px;
    line-height: 8.500px;
    color: #8c8c8c;
}

.ruler-v span {
    display: block;
    width: 16px;
    height: 32.620px;
    padding: 2px 9px 0 1px;
    word-break: break-all;
    border-top: 1px solid #777;
    background: repeating-linear-gradient(180deg, transparent 0 7.100px, #777 7.100px 8.100px) 100% 0 / 3px 100% no-repeat;
}

.ruler-v span:first-child {
    height: 18.600px;
    padding-top: 0;
    border-top: 0;
}

.canvas {
    width: 1592px;
    height: 959px;
    flex: none;
    background: #5c5c5c;
    font-family: "Liberation Sans", sans-serif;
}

.tick-y text {
    font-size: 12.500px;
    text-anchor: end;
    fill: #111;
}

.tick-x text {
    font-size: 12.500px;
    text-anchor: middle;
    fill: #111;
}

.plot-label {
    font-size: 18px;
    fill: #111;
}

.plot-label.red {
    fill: #ee3124;
}

.axis-cued {
    font-size: 21.500px;
    text-anchor: middle;
    fill: #111;
}

.axis-long {
    font-size: 21.100px;
    text-anchor: middle;
    fill: #111;
}

.stim-label text {
    font-size: 13px;
    fill: #222;
}

.time-label {
    font-size: 18.700px;
    fill: #111;
}

.scroll-v {
    flex: 1;
    background: #484848;
    border-right: 2px solid #363636;
}

/* bottom bar */
.statusbar {
    height: 17px;
    flex: none;
    display: flex;
    align-items: center;
    position: relative;
    padding-bottom: 1px;
    background: #484848;
    border-right: 2px solid #363636;
    color: #c4c4c4;
    font-size: 11.500px;
}

.statusbar svg {
    position: absolute;
    fill: none;
    stroke: #a0a0a0;
}

.statusbar .chev {
    width: 9px;
    height: 6px;
    stroke-width: 1.200;
}

.zoom-val {
    margin-left: 15px;
    width: 30px;
    white-space: nowrap;
}

.cut {
    opacity: .6;
}

.statusbar > .chev:nth-of-type(1) { left: 61px; top: 5px; }
.statusbar > .nav { width: 10px; height: 12px; top: 2px; fill: #8a8a8a; stroke: #8a8a8a; }
.statusbar > .nav:nth-of-type(2) { left: 77px; }
.statusbar > .nav:nth-of-type(3) { left: 98px; }
.statusbar > .nav:nth-of-type(4) { left: 218px; }
.statusbar > .nav:nth-of-type(5) { left: 240px; }
.statusbar > .nav.dim { fill: #6f6f6f; stroke: #6f6f6f; }
.statusbar > .timer { left: 264px; top: 0; width: 15px; height: 15px; }
.statusbar > .chev:nth-of-type(7) { left: 399px; top: 5px; }
.statusbar > .chev:nth-of-type(8) { left: 502px; top: 5px; stroke: #6f6f6f; }
.statusbar > .split { left: 1590px; top: 3px; width: 16px; height: 11px; }
.statusbar > .resize-grip { left: 1613px; top: 6px; width: 9px; height: 9px; }

.page-field {
    position: absolute;
    left: 118px;
    top: 0;
    width: 90px;
    height: 16px;
    padding-left: 5px;
    line-height: 15px;
    background: #555;
    color: #d0d0d0;
}

.page-field svg {
    right: 5px;
    top: 5px;
}

.preflight {
    position: absolute;
    left: 297px;
}

.ok-dot {
    position: absolute;
    left: 423px;
    width: 10px;
    height: 10px;
    top: 3px;
    border-radius: 50%;
    background: #1d6b32;
}

.no-errors {
    position: absolute;
    left: 439px;
    color: #8a8a8a;
}

/* right panel */
.panel {
    width: 254px;
    flex: none;
    background: #484848;
    border-left: 1px solid #333;
}

.panel-head {
    height: 12px;
    line-height: 10px;
    text-align: right;
    padding-right: 6px;
    font-size: 10px;
    color: #aaa;
    background: #3d3d3d;
}

.tabs {
    height: 26px;
    display: flex;
    background: #3c3c3c;
    font-size: 12.300px;
    font-weight: 700;
    color: #a8a8a8;
}

.ptab {
    display: flex;
    align-items: center;
    justify-content: center;
    border-right: 1px solid #333;
    white-space: nowrap;
}

.ptab.active {
    width: 82px;
    background: #484848;
    color: #eee;
}

.ptab.t2 { width: 50px; padding-left: 4px; }
.ptab.t3 { width: 81px; padding-left: 6px; }

.sec {
    padding: 0 10px;
    border-bottom: 1px solid #3e3e3e;
}

.sec-title {
    height: 16px;
    line-height: 16px;
    font-size: 11.500px;
    color: #e8e8e8;
}

.sec-linked { padding-top: 10px; padding-bottom: 8px; }
.sec-transform { padding-top: 9px; height: 107px; }
.sec-appearance { padding-top: 9px; padding-bottom: 8px; }
.sec-align { padding-top: 8px; padding-bottom: 6px; }
.sec-wrap { padding-top: 9px; padding-bottom: 6px; }
.sec-fit { padding-top: 9px; padding-bottom: 10px; }
.sec-quick { padding-top: 4px; border-bottom: 0; }

.transform {
    display: flex;
    align-items: flex-start;
    margin-top: 7px;
}

.proxy {
    width: 25px;
    height: 24px;
    margin: 11px 0 0 6px;
}

.xywh {
    display: grid;
    grid-template-columns: 13px 54px 27px 55px;
    grid-auto-rows: 20px;
    row-gap: 5px;
    margin-left: 15px;
}

.xywh label {
    line-height: 20px;
    font-size: 11.500px;
    font-weight: 700;
    color: #c8c8c8;
}

.xywh .right {
    text-align: right;
    padding-right: 3px;
}

.field {
    padding-left: 4px;
    line-height: 18px;
    font-size: 11px;
    letter-spacing: .3px;
    overflow: hidden;
    white-space: nowrap;
    background: #3d3d3d;
    border: 1px solid #6a6a6a;
    border-radius: 3px;
}

.chain {
    width: 12px;
    height: 14px;
    margin: 16px 0 0 9px;
}

.dots {
    display: flex;
    justify-content: flex-end;
    gap: 2px;
    height: 16px;
    padding: 6px 5px 0 0;
}

.sec-transform .dots {
    margin-top: 7px;
}

.sec-wrap .dots {
    margin-top: 8px;
}

.dots i {
    width: 3px;
    height: 3px;
    border-radius: 50%;
    background: #a8a8a8;
}

.app-row {
    height: 26px;
    display: grid;
    grid-template-columns: 28px 62px 69px 61px;
    align-items: center;
    color: #e0e0e0;
}

.sec-appearance .sec-title {
    margin-bottom: 4px;
}

.sw {
    width: 16px;
    height: 16px;
    margin-left: 1px;
}

.lnk {
    color: #b4b4b4;
    text-decoration: underline;
}

.fx {
    padding-left: 3px;
    font: italic 13px "Liberation Serif", serif;
    color: #a0a0a0;
}

.spin {
    grid-column: 3;
    height: 20px;
    display: flex;
    background: #3d3d3d;
    border: 1px solid #666;
    border-radius: 3px;
}

.arrows {
    width: 17px;
    border-right: 1px solid #666;
    padding: 2px 0 0 4px;
}

.arrows svg {
    width: 8px;
    height: 14px;
    fill: none;
    stroke: #ccc;
}

.spin-val {
    flex: 1;
    padding-left: 4px;
    line-height: 18px;
}

.drop {
    width: 18px;
    display: flex;
    align-items: center;
    justify-content: center;
    border-left: 1px solid #666;
}

.drop svg {
    width: 9px;
    height: 9px;
    fill: none;
    stroke: #ccc;
    stroke-width: 1.200;
}

.pick {
    grid-column: 4;
    margin-left: 6px;
    height: 20px;
    display: flex;
    background: #3d3d3d;
    border: 1px solid #666;
    border-radius: 3px;
}

.pick-sw {
    width: 36px;
    background: #dcdcdc;
    display: flex;
    align-items: center;
    justify-content: center;
}

.black-bar {
    width: 22px;
    height: 8px;
    background: #000;
}

.pick-sw svg {
    width: 36px;
    height: 18px;
}

.icon-row {
    display: flex;
    align-items: center;
    height: 24px;
    margin-top: 7px;
}

.ico {
    display: flex;
    align-items: center;
    justify-content: center;
    flex: none;
}

.ico svg {
    width: 16px;
    height: 16px;
}

.a0 { width: 28px; }
.a0 svg { width: 20px; height: 18px; }
.vsep { width: 1px; height: 22px; background: #3e3e3e; margin: 0 -1px 0 4px; }
.a1 { width: 32px; }
.a1 svg { width: 18px; height: 16px; }

.w1 { width: 30px; }
.w1.on svg { padding: 2px; width: 22px; height: 22px; background: #262626; border-radius: 3px; }
.dot-ico svg { width: 18px; }
.wrap-row { margin-top: 6px; margin-left: -3px; }

.invert {
    display: flex;
    align-items: center;
    gap: 7px;
    margin-left: 4px;
    color: #7a7a7a;
}

.cb {
    width: 12px;
    height: 12px;
    border: 1px solid #a0a0a0;
    border-radius: 2px;
}

.cb.dim {
    border-color: #666;
}

.f1 { width: 25px; }
.fit-row { height: 21px; margin-left: -1px; }

.btn {
    height: 21px;
    padding: 0;
    background: transparent;
    border: 1px solid #666;
    border-radius: 2px;
    font-family: Lato, "Liberation Sans", sans-serif;
    font-size: 11px;
    color: #e4e4e4;
}

.options {
    width: 65px;
    margin-left: 6px;
}

.autofit {
    display: flex;
    align-items: center;
    gap: 6px;
    height: 16px;
    margin: 12px 0 0 4px;
    color: #e0e0e0;
}

.quick-grid {
    display: grid;
    grid-template-columns: 105px 105px;
    gap: 10px;
    margin-top: 7px;
}

.span2 {
    grid-column: span 2;
}
```
